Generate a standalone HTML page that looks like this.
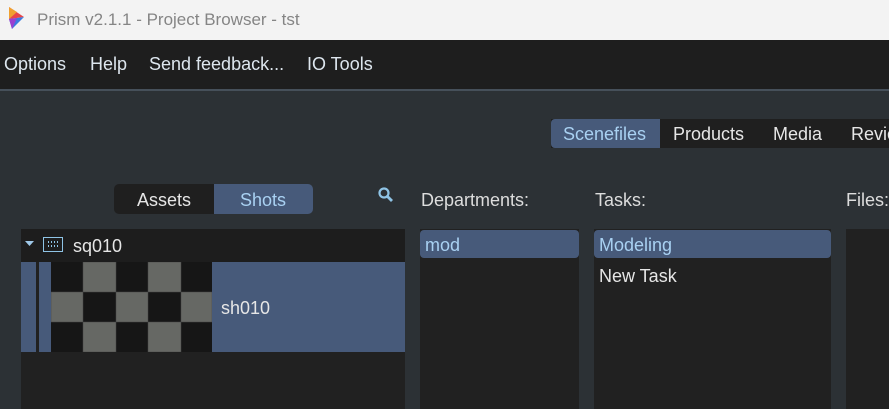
<!DOCTYPE html><html><head><style>
body{margin:0;width:889px;height:409px;overflow:hidden;background:#2c3135;font-family:"Liberation Sans",sans-serif;position:relative}
.a{position:absolute}
.t{font-size:17px;color:#e6e6e6;white-space:nowrap}
.sel{color:#a9d1f2}
</style></head><body>
<div class="a" style="left:0;top:0;width:889px;height:40px;background:#f3f3f3"></div>
<svg class="a" style="left:8px;top:6px" width="18" height="24" viewBox="0 0 18 24"><polygon points="1,1 16,11 1,13" fill="#e8454a"/><polygon points="1,1 9,6 1,13" fill="#f0a030"/><polygon points="1,13 16,11 4,23" fill="#3a7be0"/><polygon points="1,13 9,12 4,23" fill="#9a3fd0"/></svg>
<div class="a t" style="left:37px;top:10px;color:#858585;font-size:17px">Prism v2.1.1 - Project Browser - tst</div>
<div class="a" style="left:0;top:40px;width:889px;height:49px;background:#1e1e1e"></div>
<div class="a t" style="left:4px;top:54px;font-size:18px;color:#dde6ee">Options</div>
<div class="a t" style="left:90px;top:54px;font-size:18px;color:#dde6ee">Help</div>
<div class="a t" style="left:149px;top:54px;font-size:18px;color:#dde6ee">Send feedback...</div>
<div class="a t" style="left:307px;top:54px;font-size:18px;color:#dde6ee">IO Tools</div>
<div class="a" style="left:0;top:89px;width:889px;height:2px;background:#46505a"></div>

<div class="a" style="left:551px;top:119px;width:338px;height:29px;background:#1f1f1f"></div>
<div class="a" style="left:551px;top:119px;width:109px;height:29px;background:#475a7a;border-radius:4px 0 0 4px"></div>
<div class="a t sel" style="left:563px;top:124px;font-size:18px">Scenefiles</div>
<div class="a t" style="left:673px;top:124px;font-size:18px">Products</div>
<div class="a t" style="left:773px;top:124px;font-size:18px">Media</div>
<div class="a t" style="left:851px;top:124px;font-size:18px">Review</div>

<div class="a" style="left:114px;top:184px;width:100px;height:30px;background:#1f1f1f;border-radius:5px 0 0 5px"></div>
<div class="a" style="left:214px;top:184px;width:99px;height:30px;background:#475a7a;border-radius:0 5px 5px 0"></div>
<div class="a t" style="left:137px;top:190px;font-size:18px">Assets</div>
<div class="a t sel" style="left:240px;top:190px;font-size:18px">Shots</div>
<svg class="a" style="left:377px;top:186px" width="18" height="18" viewBox="0 0 18 18"><circle cx="7" cy="7" r="4.5" fill="none" stroke="#8fc4e6" stroke-width="2.2"/><line x1="10.5" y1="10.5" x2="15" y2="15" stroke="#8fc4e6" stroke-width="2.8"/></svg>

<div class="a t" style="left:421px;top:190px;font-size:18px;color:#ddd">Departments:</div>
<div class="a t" style="left:595px;top:190px;font-size:18px;color:#ddd">Tasks:</div>
<div class="a t" style="left:846px;top:190px;font-size:18px;color:#ddd">Files:</div>

<div class="a" style="left:21px;top:229px;width:384px;height:180px;background:#212121"></div>
<div class="a" style="left:21px;top:229px;width:384px;height:33px;background:#1d1d1d"></div>
<svg class="a" style="left:25px;top:240px" width="10" height="8"><polygon points="0,1 9,1 4.5,6" fill="#9fc8e8"/></svg>
<div class="a" style="left:43px;top:237px;width:20px;height:15px;border:1.5px solid #8fc4e6;box-sizing:border-box;background:repeating-linear-gradient(90deg,transparent 0 2px,#8fc4e6 2px 3px) 2px 3px/14px 2px no-repeat,repeating-linear-gradient(90deg,transparent 0 2px,#8fc4e6 2px 3px) 2px 7px/14px 2px no-repeat"></div>
<div class="a t" style="left:73px;top:236px;font-size:18px">sq010</div>
<div class="a" style="left:21px;top:262px;width:384px;height:90px;background:#475a7a"></div>
<div class="a" style="left:36px;top:262px;width:3px;height:90px;background:#212121"></div>
<svg class="a" style="left:51px;top:262px" width="161" height="90"><rect width="161" height="90" fill="#161616"/>
<g fill="#666864" stroke="#444" stroke-width="0.5"><rect x="32" y="0" width="33" height="30"/><rect x="97" y="0" width="33" height="30"/><rect x="0" y="30" width="32" height="30"/><rect x="65" y="30" width="32" height="30"/><rect x="130" y="30" width="31" height="30"/><rect x="32" y="60" width="33" height="30"/><rect x="97" y="60" width="33" height="30"/></g></svg>
<div class="a t" style="left:221px;top:298px;font-size:18px">sh010</div>

<div class="a" style="left:420px;top:229px;width:159px;height:180px;background:#212121"></div>
<div class="a" style="left:420px;top:230px;width:159px;height:28px;background:#475a7a;border-radius:4px"></div>
<div class="a t sel" style="left:425px;top:235px;font-size:18px">mod</div>

<div class="a" style="left:594px;top:229px;width:237px;height:180px;background:#212121"></div>
<div class="a" style="left:594px;top:230px;width:237px;height:28px;background:#475a7a;border-radius:4px"></div>
<div class="a t sel" style="left:599px;top:235px;font-size:18px">Modeling</div>
<div class="a t" style="left:599px;top:266px;font-size:18px">New Task</div>

<div class="a" style="left:846px;top:229px;width:43px;height:180px;background:#212121"></div>
</body></html>
